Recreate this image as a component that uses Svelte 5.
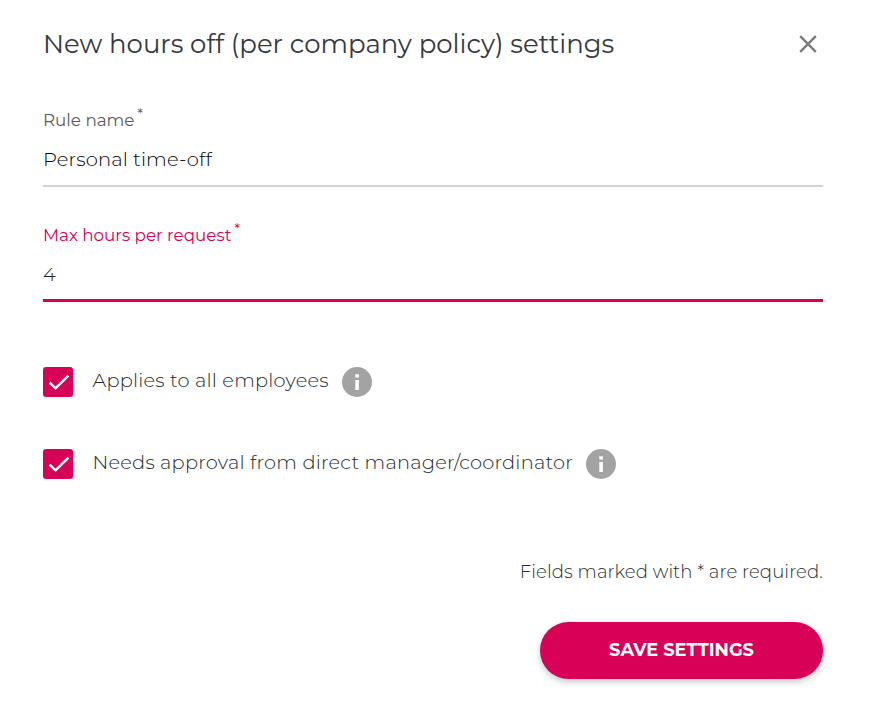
<script lang="ts">
    let ruleName = $state("Personal time-off");
    let maxHours = $state("4");

    let options = $state([
        {
            id: "all-employees",
            label: "Applies to all employees",
            checked: true,
        },
        {
            id: "needs-approval",
            label: "Needs approval from direct manager/coordinator",
            checked: true,
        },
    ]);
</script>

<main class="dialog">
    <header class="dialog__header">
        <h1>New hours off (per company policy) settings</h1>
        <button class="dialog__close" type="button" aria-label="Close">
            <svg viewBox="0 0 18 18" width="18" height="18">
                <path d="M1.2 1.2 16.8 16.8M16.8 1.2 1.2 16.8" />
            </svg>
        </button>
    </header>

    <form onsubmit={(event) => event.preventDefault()}>
        <div class="field">
            <label for="rule-name">
                <span class="field__label">Rule name</span>
                <span class="field__star">*</span>
            </label>
            <input id="rule-name" type="text" bind:value={ruleName} />
        </div>

        <div class="field field--active">
            <label for="max-hours">
                <span class="field__label">Max hours per request</span>
                <span class="field__star">*</span>
            </label>
            <input id="max-hours" type="text" bind:value={maxHours} />
        </div>

        <div class="options">
            {#each options as option (option.id)}
                <div class="option">
                    <input
                        class="option__input"
                        id={option.id}
                        type="checkbox"
                        bind:checked={option.checked}
                    />
                    <label for={option.id}>
                        <span class="option__box" class:option__box--on={option.checked}>
                            {#if option.checked}
                                <svg viewBox="0 0 30 30" width="30" height="30">
                                    <path d="M6.7 15.7 12.5 21.3 25.4 8.6" />
                                </svg>
                            {/if}
                        </span>
                        <span class="option__text">{option.label}</span>
                    </label>
                    <svg class="option__info" viewBox="0 0 30 30" width="30" height="30">
                        <circle cx="15" cy="15" r="15" />
                        <path d="M13.3 7.3h3.6v3.2h-3.6zM13.3 12.9h3.6v10h-3.6z" />
                    </svg>
                </div>
            {/each}
        </div>

        <footer class="dialog__footer">
            <p>Fields marked with * are required.</p>
            <button class="save" type="submit"><span>SAVE SETTINGS</span></button>
        </footer>
    </form>
</main>

<style>
    :global(body) {
        background: #fff;
    }

    .dialog {
        box-sizing: border-box;
        width: 875px;
        height: 710px;
        padding: 24px 52px 0 43px;
        overflow: hidden;
        font-family: Montserrat, Inter, sans-serif;
        color: #36393e;
    }

    button,
    input {
        font-family: inherit;
    }

    .dialog__header {
        display: flex;
        justify-content: space-between;
        align-items: center;
        height: 40px;
        padding-right: 6px;
    }

    h1 {
        margin: 0;
        font-size: 25.95px;
        font-weight: 400;
        line-height: 40px;
        white-space: nowrap;
    }

    .dialog__close {
        display: flex;
        padding: 0;
        border: 0;
        background: none;
    }

    .dialog__close path {
        fill: none;
        stroke: #7b7b7b;
        stroke-width: 2.4;
    }

    .field {
        display: flex;
        flex-direction: column;
        height: 83px;
        margin-top: 40px;
        color: #5c5c5c;
    }

    .field + .field {
        margin-top: 32px;
    }

    .field label {
        display: flex;
        gap: 3px;
        height: 32px;
        line-height: 33px;
    }

    .field__label {
        font-size: 16.75px;
        font-weight: 400;
    }

    .field__star {
        font-size: 14px;
        font-weight: 400;
        line-height: 20px;
    }

    .field input {
        box-sizing: border-box;
        width: 100%;
        height: 51px;
        padding: 0 0 3px;
        border: 0;
        border-bottom: 2px solid #d2d2d2;
        border-radius: 0;
        outline: none;
        background: none;
        color: #000;
        font-size: 19.5px;
        font-weight: 300;
        letter-spacing: 0.12px;
    }

    .field.field--active {
        color: #d90057;
    }

    .field--active input {
        padding-bottom: 2px;
        border-bottom: 3px solid #d90057;
        color: #222;
    }

    .options {
        display: flex;
        flex-direction: column;
        gap: 52px;
        margin-top: 65px;
    }

    .option {
        display: flex;
        align-items: center;
        gap: 13px;
        height: 30px;
    }

    .option label {
        display: flex;
        gap: 19.5px;
    }

    .option__input {
        position: absolute;
        opacity: 0;
        pointer-events: none;
    }

    .option__box {
        box-sizing: border-box;
        width: 30px;
        height: 30px;
        border: 2px solid #a3a3a3;
        border-radius: 3px;
    }

    .option__box--on {
        border: 0;
        background: #d90057;
    }

    .option__box svg {
        display: block;
    }

    .option__box path {
        fill: none;
        stroke: #fff;
        stroke-width: 2.5;
    }

    .option__text {
        color: #25282c;
        font-size: 19.4px;
        font-weight: 300;
        line-height: 27px;
        letter-spacing: 0.22px;
        white-space: nowrap;
    }

    .option__info circle {
        fill: #a3a3a3;
    }

    .option__info path {
        fill: #fff;
    }

    .dialog__footer {
        display: flex;
        flex-direction: column;
        align-items: flex-end;
        margin-top: 78px;
    }

    .dialog__footer p {
        margin: 0;
        font-size: 18.1px;
        font-weight: 300;
        line-height: 30px;
        letter-spacing: 0.08px;
        color: #2b2b2b;
    }

    .save {
        width: 283px;
        height: 57px;
        margin-top: 35px;
        padding: 0 0 2px;
        border: 0;
        border-radius: 29px;
        background: #d90057;
        box-shadow: 0 3px 6px rgba(0, 0, 0, 0.22);
        color: #fff;
        font-size: 17.8px;
        font-weight: 700;
    }
</style>
